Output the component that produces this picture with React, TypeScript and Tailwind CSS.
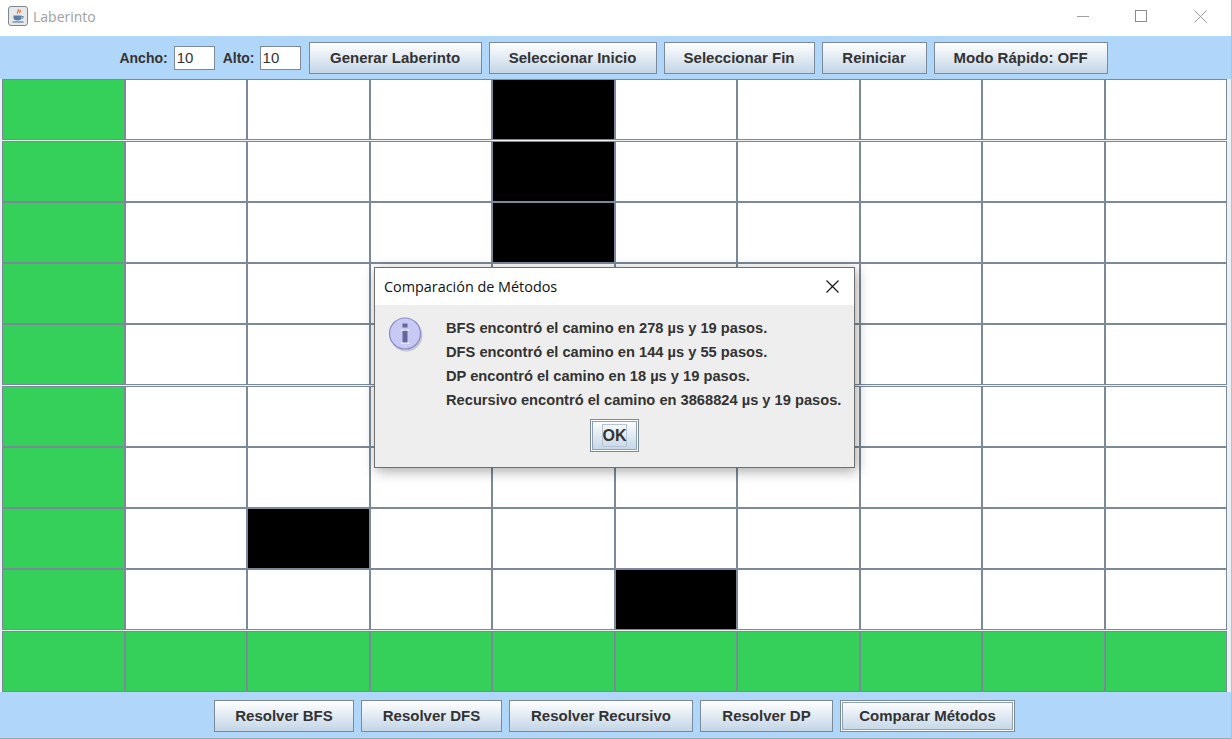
const GREEN = 'g';
const BLACK = 'b';

// 10x10 maze, the covered cells behind the dialog stay white
const maze: string[] = [
  'g...b.....',
  'g...b.....',
  'g...b.....',
  'g.........',
  'g.........',
  'g.........',
  'g.........',
  'g.b.......',
  'g....b....',
  'gggggggggg',
];

function Cell({ kind }: { kind: string }) {
  const bg = kind === GREEN ? 'bg-[#35d059]' : kind === BLACK ? 'bg-black' : 'bg-white';
  return <div className={`h-[61px] border border-[#7a8a99] ${bg}`} />;
}

function JavaButton({ label, width, focused }: { label: string; width: string; focused?: boolean }) {
  return (
    <button
      className={`${width} h-full shrink-0 border border-[#7a8a99] bg-gradient-to-b from-white to-[#c3d5e6] pt-px text-[15px] font-bold text-[#333333] ${
        focused ? 'shadow-[inset_0_0_0_1px_#ffffff,inset_0_0_0_2px_#8fa2b5]' : ''
      }`}
    >
      {label}
    </button>
  );
}

function NumberField({ value }: { value: string }) {
  return (
    <input
      readOnly
      value={value}
      className="h-6 w-[41px] border border-[#7a8a99] bg-white pl-0.5 text-[15px] text-[#333333] outline-none shadow-[0_0_0_1px_#ffffff_inset]"
    />
  );
}

function CloseGlyph({ color, width }: { color: string; width: number }) {
  return (
    <svg width="13" height="13" viewBox="0 0 13 13" className="shrink-0">
      <path d="M0.5 0.5L12.500 12.500M12.500 0.5L0.5 12.500" fill="none" stroke={color} strokeWidth={width} />
    </svg>
  );
}

function JavaIcon() {
  return (
    <svg width="20" height="20" viewBox="0 0 20 20" className="shrink-0">
      <rect x="0.5" y="0.5" width="19" height="19" rx="2.500" fill="#e8e8e8" stroke="#7d8790" />
      <path d="M10.500 3c1 1.500-2 2.500-1 4.500M12.500 4c.5 1-1.500 2-.8 3.200" fill="none" stroke="#d9662a" strokeWidth="1.100" />
      <path d="M5.500 9.500h8v2.500c0 1.500-1.500 2.500-4 2.500s-4-1-4-2.500z" fill="#5a7fa6" />
      <path d="M13.500 10.500h1.500c.8 0 .8 2-1.500 2" fill="none" stroke="#5a7fa6" />
      <path d="M4.500 16h11" stroke="#5a7fa6" strokeWidth="1.200" />
    </svg>
  );
}

function InfoIcon() {
  return (
    <svg width="36" height="36" viewBox="0 0 36 36" className="shrink-0">
      <circle cx="18.500" cy="18.500" r="16" fill="#9a9ab5" opacity="0.45" />
      <circle cx="17" cy="16.500" r="15.500" fill="#c9c9f6" stroke="#8b8bc4" strokeWidth="1.200" />
      <rect x="14.500" y="6.500" width="5" height="4" fill="#66669c" />
      <rect x="14.500" y="12.500" width="5" height="14" fill="#66669c" />
      <rect x="13" y="12.500" width="8" height="1.200" fill="#ffffff" />
      <rect x="13" y="25.500" width="8" height="1.200" fill="#ffffff" />
    </svg>
  );
}

export default function App() {
  return (
    <div className="relative flex h-[739px] w-[1232px] flex-col overflow-hidden border-r border-[#b8c0c8] bg-white font-['Liberation_Sans',Arial,sans-serif]">
      {/* title bar */}
      <div className="flex h-9 shrink-0 items-center pb-1 pl-2 pr-[24px]">
        <JavaIcon />
        <span className="ml-[5px] mt-0.5 font-['Open_Sans',sans-serif] text-sm text-[#a0a0a0]">Laberinto</span>
        <div className="ml-auto flex items-center">
          <div className="h-px w-3 bg-[#a0a0a0]" />
          <div className="ml-[46px] h-3 w-3 border border-[#8c8c8c]" />
          <div className="ml-[47px]">
            <CloseGlyph color="#9a9a9a" width={1} />
          </div>
        </div>
      </div>

      {/* toolbar */}
      <div className="flex h-[43px] shrink-0 items-center justify-center bg-[#b0d7f9] pr-[4px]">
        <span className="mr-[6px] text-sm font-bold text-[#333333]">Ancho:</span>
        <NumberField value="10" />
        <span className="ml-2 mr-[5px] text-sm font-bold text-[#333333]">Alto:</span>
        <NumberField value="10" />
        <div className="ml-2 flex h-8 gap-[7px]">
          <JavaButton label="Generar Laberinto" width="w-[173px]" />
          <JavaButton label="Seleccionar Inicio" width="w-[168px]" />
          <JavaButton label="Seleccionar Fin" width="w-[151px]" />
          <JavaButton label="Reiniciar" width="w-[105px]" />
          <JavaButton label="Modo Rápido: OFF" width="w-[174px]" />
        </div>
      </div>

      {/* maze */}
      <div className="grid h-[613px] shrink-0 grid-cols-10 grid-rows-[62px_61px_61px_61px_62px_61px_61px_61px_62px_61px] bg-[#eef1f4] pl-[2px] pr-[4px]">
        {maze.flatMap((row, r) => row.split('').map((kind, c) => <Cell key={`${r}-${c}`} kind={kind} />))}
      </div>

      {/* actions */}
      <div className="flex h-[47px] shrink-0 items-start justify-center border-b border-[#9aa7b3] bg-[#b0d7f9] pr-[2px] pt-2">
        <div className="flex h-8 gap-[7px]">
          <JavaButton label="Resolver BFS" width="w-[140px]" />
          <JavaButton label="Resolver DFS" width="w-[141px]" />
          <JavaButton label="Resolver Recursivo" width="w-[184px]" />
          <JavaButton label="Resolver DP" width="w-[133px]" />
          <JavaButton label="Comparar Métodos" width="w-[175px]" focused />
        </div>
      </div>

      {/* dialog */}
      <div className="absolute left-[374px] top-[267px] flex h-[201px] w-[481px] flex-col border border-[#6f6f6f] bg-[#eeeeee] shadow-[2px_3px_12px_rgba(0,0,0,0.35)]">
        <div className="flex h-[37px] shrink-0 items-center justify-between bg-white pl-[9px] pr-[15px]">
          <span className="font-['Open_Sans',sans-serif] text-[14.4px] text-[#111111]">Comparación de Métodos</span>
          <CloseGlyph color="#111111" width={1.1} />
        </div>
        <div className="flex flex-1 flex-col">
          <div className="flex pl-[13px] pt-[12px]">
            <InfoIcon />
            <div className="ml-[22px] mt-0.5 flex flex-col gap-[5px] text-[14.67px] font-bold leading-[19px] text-[#333333]">
              <span>BFS encontró el camino en 278 µs y 19 pasos.</span>
              <span>DFS encontró el camino en 144 µs y 55 pasos.</span>
              <span>DP encontró el camino en 18 µs y 19 pasos.</span>
              <span>Recursivo encontró el camino en 3868824 µs y 19 pasos.</span>
            </div>
          </div>
          <div className="mt-[9px] flex justify-center">
            <button className="flex h-[33px] w-[49px] items-center justify-center border border-[#7a8a99] bg-gradient-to-b from-white to-[#c3d5e6] text-base font-bold text-[#333333] shadow-[inset_0_0_0_1px_#ffffff,inset_0_0_0_2px_#8fa2b5]">
              <span className="flex h-[23px] w-[25px] items-center justify-center border border-[#b5c4d3]">OK</span>
            </button>
          </div>
        </div>
      </div>
    </div>
  );
}
